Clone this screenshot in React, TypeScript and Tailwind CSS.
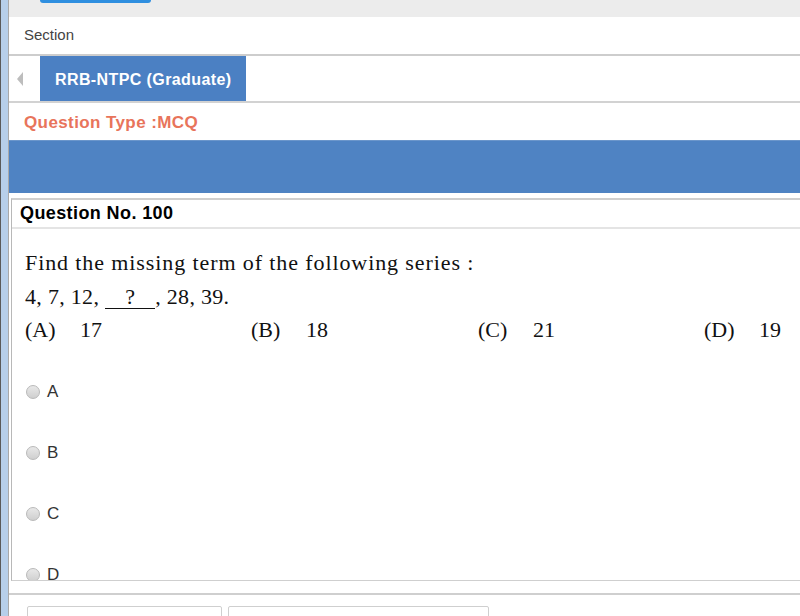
import React from "react";

export default function App() {
  const sans = { fontFamily: '"Liberation Sans", Arial, sans-serif' };
  const serif = { fontFamily: '"Liberation Serif", "Times New Roman", serif' };
  const opts = [
    ["(A)", "17"],
    ["(B)", "18"],
    ["(C)", "21"],
    ["(D)", "19"],
  ];
  return (
    <div className="w-[800px] h-[616px] overflow-hidden flex bg-white" style={sans}>
      <div className="w-[9px] h-full border-l border-l-[#5a5a5a] border-r border-r-[#a9a9a9] bg-[#b7cfea] shrink-0" />
      <div className="flex-1 flex flex-col min-w-0">
        <div className="h-[17px] bg-[#ececec] relative shrink-0">
          <div className="absolute left-[31px] top-0 w-[111px] h-[3px] bg-[#2f8fe0] rounded-b-[3px]" />
        </div>
        <div className="h-[39px] border-b-2 border-[#cdcdcd] flex items-center pl-[15px] text-[15px] text-[#444] shrink-0">
          Section
        </div>
        <div className="h-[47px] border-b-2 border-[#d2d2d2] flex items-stretch shrink-0">
          <div className="w-[31px] flex items-center pl-[8px]">
            <div className="w-0 h-0 border-y-[7px] border-y-transparent border-r-[6px] border-r-[#bdbdbd]" />
          </div>
          <div className="w-[206px] bg-[#4b80c3] text-white font-bold text-[16px] tracking-[0.4px] flex items-center pl-[15px] pt-[2px]">
            RRB-NTPC (Graduate)
          </div>
        </div>
        <div className="h-[37px] flex items-center pl-[15px] pt-[3px] text-[17px] tracking-[0.4px] font-bold text-[#e8745b] shrink-0">
          Question Type :MCQ
        </div>
        <div className="h-[53px] bg-[#4f83c3] border-t border-[#6b96cb] shrink-0" />
        <div className="h-[5px] shrink-0" />
        <div className="ml-[2px] h-[383px] border-l border-t-2 border-b border-[#cfcfcf] border-l-[#b8b8b8] flex flex-col overflow-hidden shrink-0">
          <div className="h-[29px] border-b-2 border-[#e4e4e4] flex items-center pl-[8px] text-[18px] tracking-[0.4px] font-bold text-black shrink-0">
            Question No. 100
          </div>
          <div className="pl-[13px] pt-[17px] text-[#111]" style={serif}>
            <div className="text-[22px] leading-[34px] tracking-[0.9px]">
              Find the missing term of the following series :
            </div>
            <div className="text-[22px] leading-[34px] tracking-[0.3px]">
              4, 7, 12,<span className="inline-block w-[50px] ml-[6px] border-b border-[#111] leading-[22px] text-center">?</span>, 28, 39.
            </div>
            <div className="grid grid-cols-[226px_227px_226px_100px] text-[22px] leading-[34px] mt-[-1px]">
              {opts.map(([k, v]) => (
                <div key={k} className="flex">
                  <span className="w-[55px]">{k}</span>
                  <span>{v}</span>
                </div>
              ))}
            </div>
          </div>
          <div className="flex flex-col pl-[14px] mt-[36px] gap-[43px]">
            {["A", "B", "C", "D"].map((l) => (
              <div key={l} className="flex items-center h-[18px] text-[17px] text-[#333] shrink-0">
                <span className="w-[14px] h-[14px] rounded-full border border-[#b9b9b9] bg-gradient-to-b from-[#e8e8e8] to-[#cfcfcf] mr-[7px]" />
                {l}
              </div>
            ))}
          </div>
        </div>
        <div className="h-[12px] shrink-0" />
        <div className="border-t-2 border-[#cfcfcf] shrink-0" />
        <div className="flex gap-[6px] pl-[18px] pt-[11px]">
          <div className="w-[195px] h-[20px] border border-[#cfcfcf] rounded-[2px]" />
          <div className="w-[261px] h-[20px] border border-[#cfcfcf] rounded-[2px]" />
        </div>
      </div>
    </div>
  );
}
